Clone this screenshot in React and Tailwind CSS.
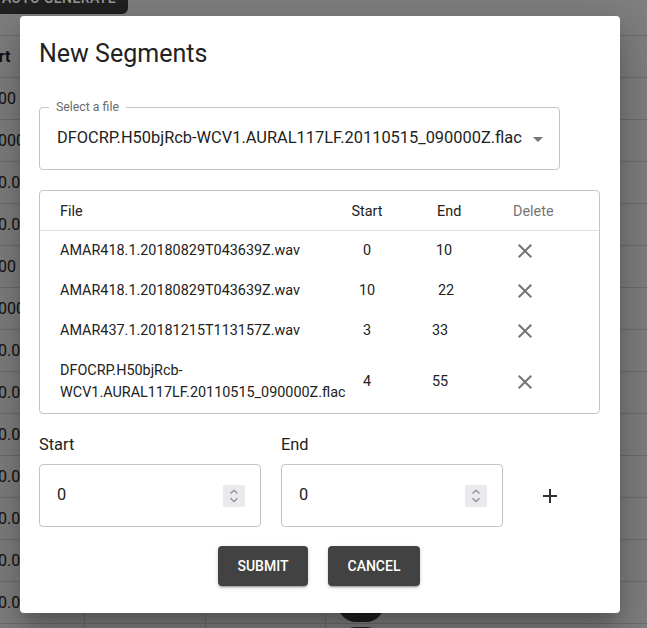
import React from "react";

const bgRows = ["100", "1000", "10.00", "10.00", "100", "1000", "10.00", "10.00", "10.00", "10.00", "10.00", "10.00", "10.00", "10.00"];

const segs = [
  { file: "AMAR418.1.20180829T043639Z.wav", start: "0", end: "10", endPad: "pl-[49px]" },
  { file: "AMAR418.1.20180829T043639Z.wav", start: "10", end: "22", endPad: "pl-[51px]" },
  { file: "AMAR437.1.20181215T113157Z.wav", start: "3", end: "33", endPad: "pl-[45px]" },
  { file: "DFOCRP.H50bjRcb-WCV1.AURAL117LF.20110515_090000Z.flac", start: "4", end: "55", endPad: "pl-[45px]" },
];

function CloseIcon() {
  return (
    <svg width="24" height="24" viewBox="0 0 24 24" className="block">
      <path fill="#757575" d="M19 6.41 17.59 5 12 10.59 6.41 5 5 6.41 10.59 12 5 17.59 6.41 19 12 13.41 17.59 19 19 17.59 13.41 12z" />
    </svg>
  );
}

function Spinner() {
  return (
    <div className="h-[22px] w-[22px] rounded-[2px] bg-[#e9e9ee]">
      <svg width="22" height="22" viewBox="0 0 22 22" className="block">
        <path d="M7.5 8.5 11 5.2 14.5 8.5" fill="none" stroke="#8a8a94" strokeWidth="1.2" />
        <path d="M7.5 13.3 11 16.6 14.5 13.3" fill="none" stroke="#8a8a94" strokeWidth="1.2" />
      </svg>
    </div>
  );
}

function NumField({ label }) {
  return (
    <div className="flex w-[222px] flex-col">
      <div className="h-[24px] text-[16.4px] leading-[24px] text-[#222]">{label}</div>
      <div className="mt-[7px] flex h-[63px] items-center justify-between rounded-[4px] border border-[#c4c4c4] pl-[17px] pr-[15px]">
        <span className="text-[16.4px] text-[#222]">0</span>
        <Spinner />
      </div>
    </div>
  );
}

export default function App() {
  return (
    <div className="relative h-[628px] w-[647px] overflow-hidden bg-[#7f7f7f] font-['Roboto',sans-serif]">
      {/* page behind the modal */}
      <div className="flex h-[35px] items-start">
        <div className="-ml-[10px] -mt-[22px] flex h-[36px] w-[138px] items-start justify-center rounded-[6px] bg-[#212121] pt-[13px] text-[14px] font-medium leading-[14px] tracking-[0.4px] text-[#9a9a9a]">
          AUTO GENERATE
        </div>
      </div>
      <div className="flex h-[42px] border-t border-[#6e6e6e]">
        <div className="w-[85px] overflow-hidden">
          <div className="-ml-[25px] text-[16px] font-bold leading-[41px] text-[#111]">Start</div>
        </div>
      </div>
      {bgRows.map((v, i) => (
        <div key={i} className="flex h-[42px] border-t border-[#6e6e6e]">
          <div className="w-[85px] overflow-hidden border-r border-[#6e6e6e]">
            <div className="-ml-[11px] text-[16px] leading-[41px] text-[#111]">{v}</div>
          </div>
          <div className="w-[121px] border-r border-[#6e6e6e]" />
          <div className="w-[120px] border-r border-[#6e6e6e]" />
          <div className="pl-[12px] pt-[3px]">
            <div className="h-[37px] w-[46px] rounded-[18px] bg-[#212121]" />
          </div>
        </div>
      ))}

      {/* modal dialog */}
      <div className="absolute left-[20px] top-[16px] flex h-[597px] w-[600px] flex-col rounded-[4px] bg-white pl-[19px] pr-[20px] pt-[22px] shadow-[0_11px_15px_-7px_rgba(0,0,0,0.2),0_24px_38px_3px_rgba(0,0,0,0.14),0_9px_46px_8px_rgba(0,0,0,0.12)]">
        <h2 className="text-[25px] leading-[32px] text-[#222]">New Segments</h2>

        <div className="relative mt-[37px] flex h-[63px] w-[521px] items-center rounded-[4px] border border-[#c4c4c4] pl-[17px] pr-[9px]">
          <span className="absolute left-[9px] top-[-9px] bg-white px-[7px] text-[12.3px] leading-[16px] text-[#6b6b6b]">Select a file</span>
          <span className="flex-1 text-[16.4px] text-[#222]">DFOCRP.H50bjRcb-WCV1.AURAL117LF.20110515_090000Z.flac</span>
          <svg width="24" height="24" viewBox="0 0 24 24" className="block">
            <path d="M7 10l5 5 5-5z" fill="#757575" />
          </svg>
        </div>

        <div className="mt-[20px] w-[561px] rounded-[4px] border border-[#c4c4c4] text-[14.4px] text-[#222]">
          <div className="grid h-[40px] grid-cols-[307px_40px_118px_1fr] items-center border-b border-[#e0e0e0] pt-[2px]">
            <div className="pl-[20px]">File</div>
            <div className="text-center">Start</div>
            <div className="pl-[50px]">End</div>
            <div className="pl-[8px] text-[#757575]">Delete</div>
          </div>
          {segs.map((s, i) => (
            <div key={i} className="grid min-h-[40px] grid-cols-[307px_40px_118px_1fr] items-center leading-[22px]">
              <div className="py-[9px] pl-[20px]">{s.file}</div>
              <div className="text-center">{s.start}</div>
              <div className={s.endPad}>{s.end}</div>
              <div className="pl-[8px]">
                <CloseIcon />
              </div>
            </div>
          ))}
        </div>

        <div className="mt-[19px] flex items-end">
          <NumField label="Start" />
          <div className="ml-[20px]">
            <NumField label="End" />
          </div>
          <div className="mb-[19px] ml-[35px]">
            <svg width="24" height="24" viewBox="0 0 24 24" className="block">
              <path d="M19 13h-6v6h-2v-6H5v-2h6V5h2v6h6v2z" fill="#333" />
            </svg>
          </div>
        </div>

        <div className="mt-[19px] flex justify-center gap-[20px] pr-[1px]">
          <button className="h-[40px] w-[90px] rounded-[4px] bg-[#424242] text-[14px] font-medium text-white shadow-[0_3px_1px_-2px_rgba(0,0,0,0.2),0_2px_2px_0_rgba(0,0,0,0.14),0_1px_5px_0_rgba(0,0,0,0.12)]">
            SUBMIT
          </button>
          <button className="h-[40px] w-[92px] rounded-[4px] bg-[#424242] text-[14px] font-medium text-white shadow-[0_3px_1px_-2px_rgba(0,0,0,0.2),0_2px_2px_0_rgba(0,0,0,0.14),0_1px_5px_0_rgba(0,0,0,0.12)]">
            CANCEL
          </button>
        </div>
      </div>
    </div>
  );
}
